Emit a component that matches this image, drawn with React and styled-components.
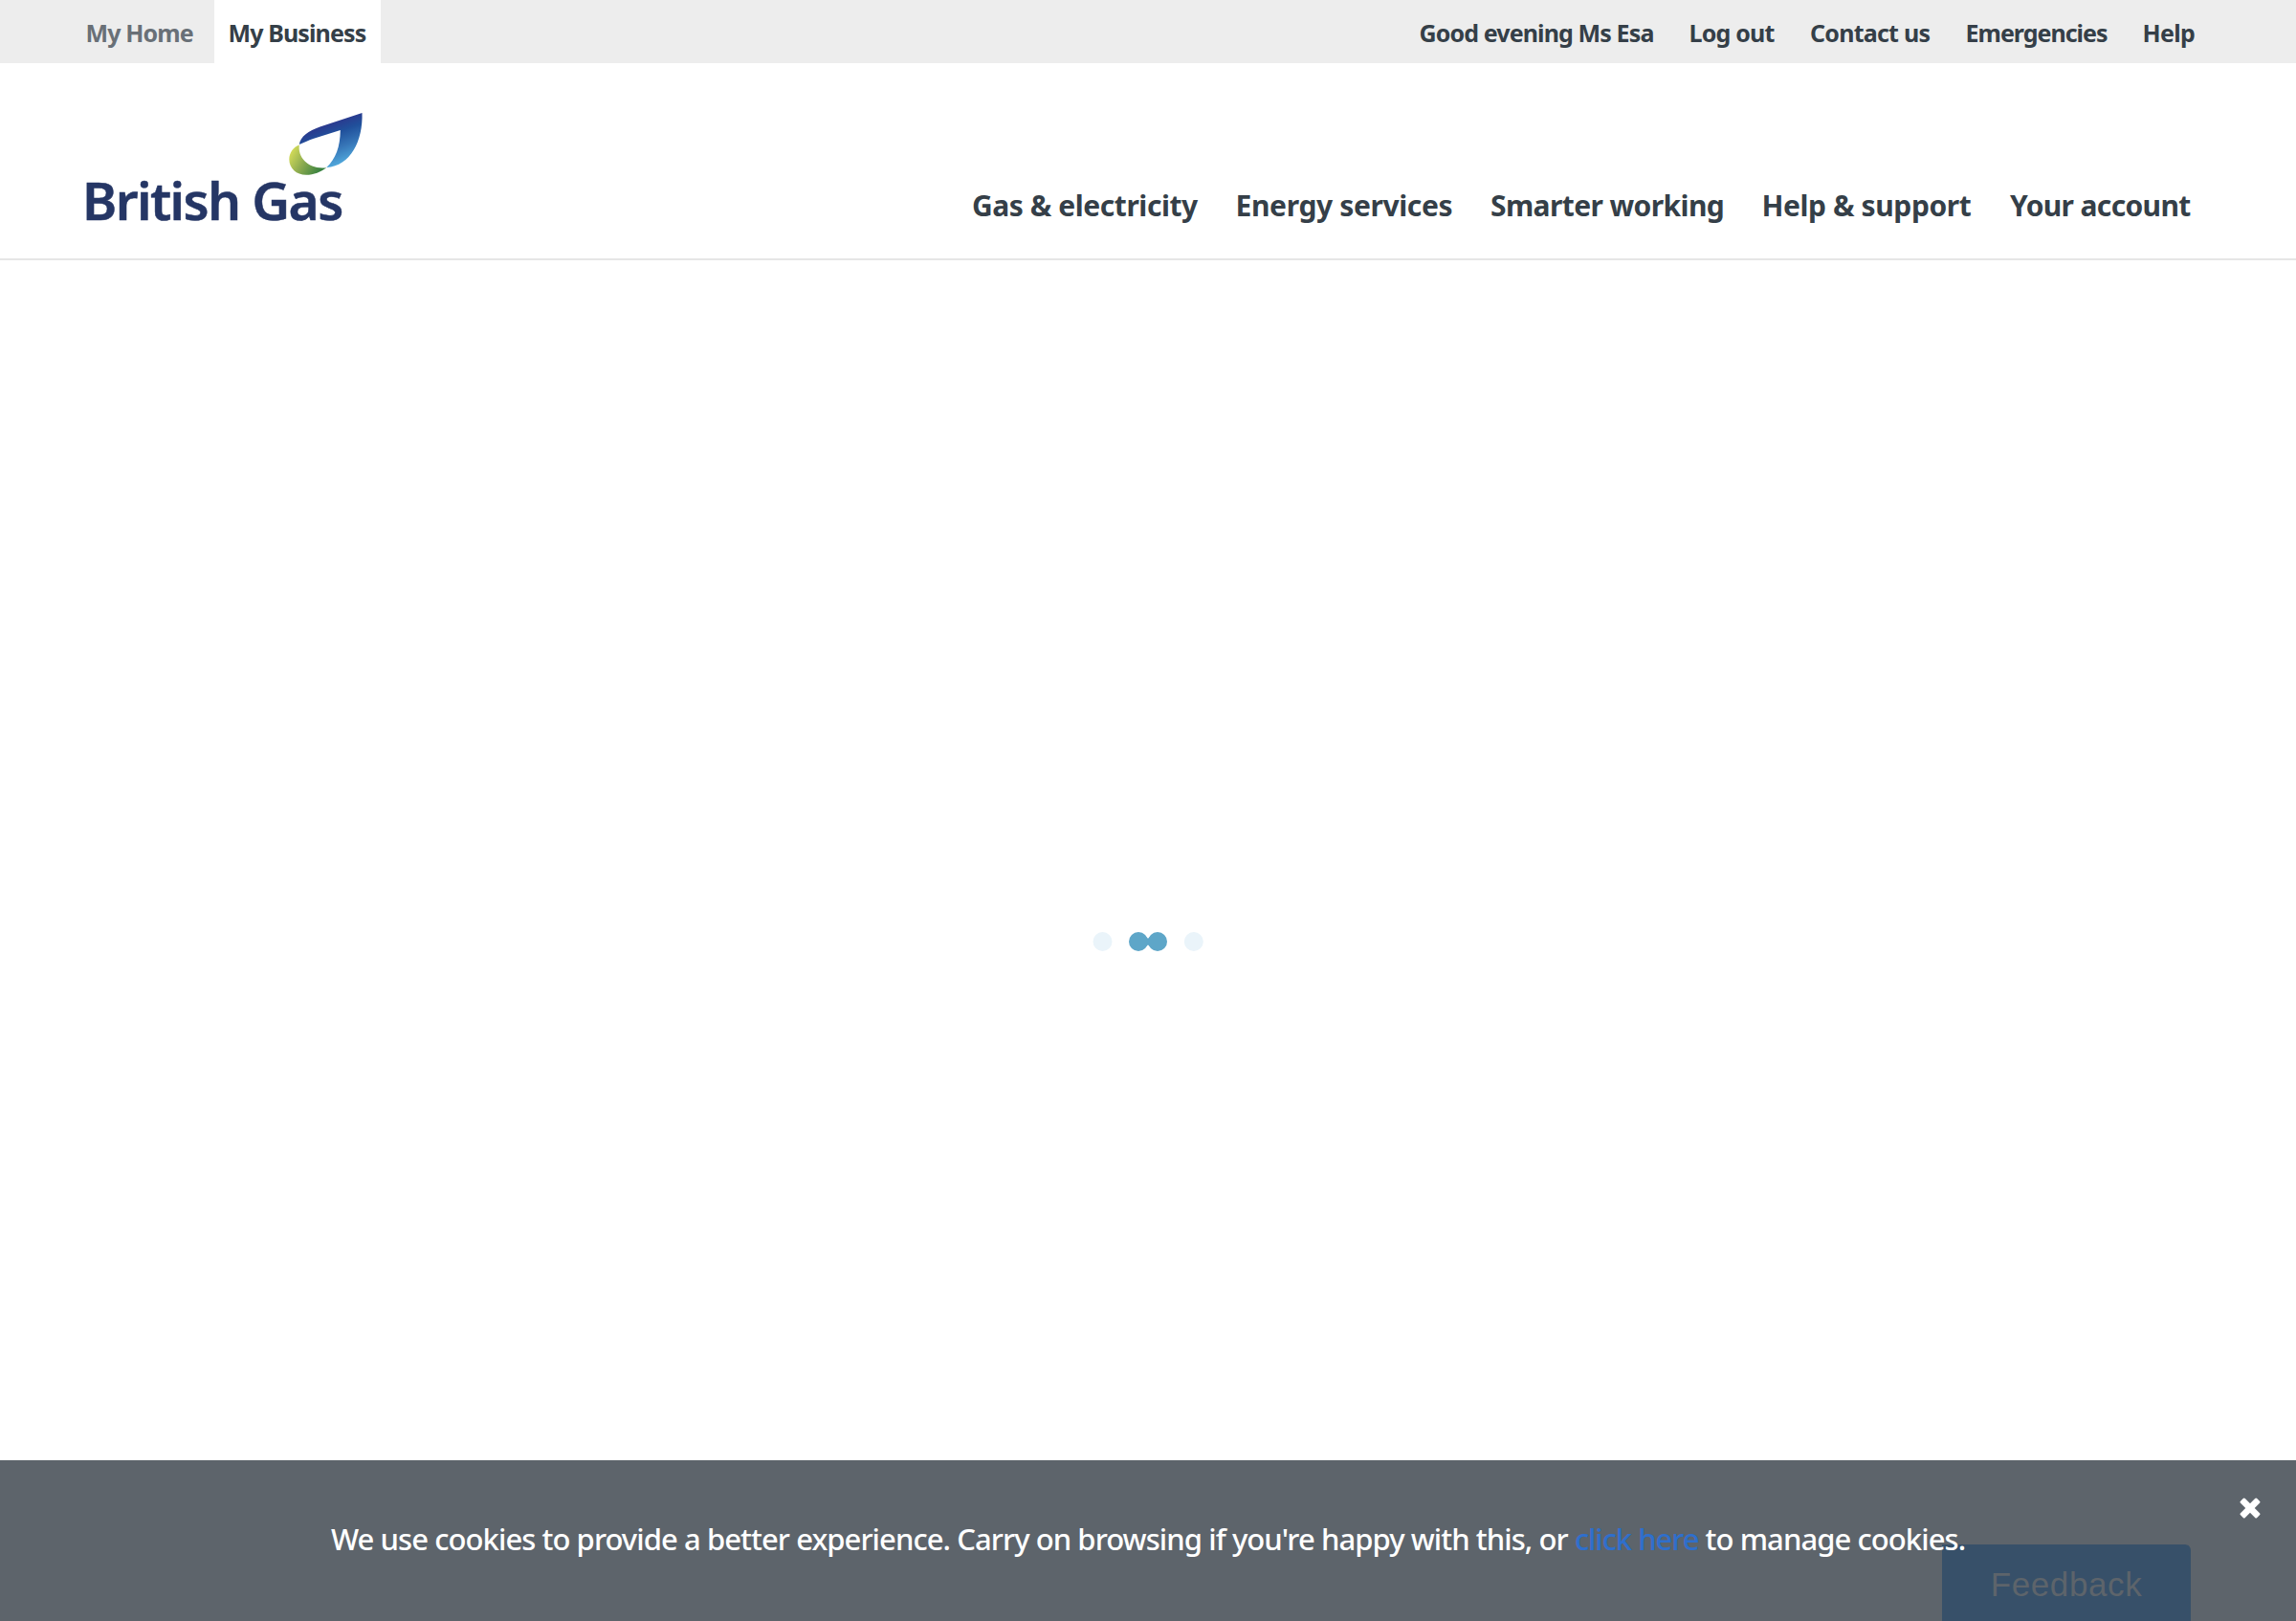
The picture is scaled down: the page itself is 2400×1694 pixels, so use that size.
import React from "react";
import styled, { createGlobalStyle } from "styled-components";

const GlobalStyle = createGlobalStyle`
  * { box-sizing: border-box; }
  body {
    margin: 0;
    background: #fff;
    color: #353f48;
    font-family: "Noto Sans", "Open Sans", sans-serif;
  }
`;

const Page = styled.div`
  display: flex;
  flex-direction: column;
  height: 1694px;
  overflow: hidden;
`;

const TopBar = styled.div`
  display: flex;
  justify-content: space-between;
  height: 66px;
  padding-right: 105px;
  padding-left: 73px;
  background: #ededed;
`;

const Tabs = styled.div`
  display: flex;
`;

const Tab = styled.a`
  width: ${(p) => (p.$active ? 174 : 151)}px;
  padding: 2px 0 0 ${(p) => (p.$active ? 14.5 : 16.5)}px;
  background: ${(p) => (p.$active ? "#fff" : "transparent")};
  color: ${(p) => (p.$active ? "#353f48" : "#697077")};
  font-size: 25px;
  font-weight: 700;
  line-height: 64px;
  letter-spacing: -0.88px;
  white-space: nowrap;
`;

const UtilityLinks = styled.nav`
  display: flex;
  gap: 36px;
  padding-top: 2px;
`;

const UtilityLink = styled.a`
  width: ${(p) => p.$width}px;
  font-size: 25px;
  font-weight: 700;
  line-height: 64px;
  letter-spacing: ${(p) => p.$tracking}px;
  white-space: nowrap;
`;

const Header = styled.header`
  display: flex;
  align-items: flex-end;
  justify-content: space-between;
  height: 206px;
  padding: 0 110px 24px 80px;
  border-bottom: 2px solid #e6e6e6;
`;

const Logo = styled.svg`
  display: block;
  width: 300px;
  height: 136px;
`;

const Wordmark = styled.text`
  fill: #253665;
  stroke: #253665;
  stroke-width: 0.5px;
  font-size: 55px;
  font-weight: 600;
  letter-spacing: -1.6px;
`;

const MainNav = styled.nav`
  display: flex;
  gap: 39px;
  padding-bottom: 11px;
`;

const NavLink = styled.a`
  width: ${(p) => p.$width}px;
  font-size: 30px;
  font-weight: 700;
  line-height: 40px;
  letter-spacing: ${(p) => p.$tracking}px;
  white-space: nowrap;
`;

const Main = styled.main`
  display: flex;
  flex: 1;
  justify-content: center;
  padding-top: 702px;
`;

const Loader = styled.svg`
  width: 120px;
  height: 20px;
`;

const CookieBar = styled.footer`
  position: relative;
  display: flex;
  justify-content: space-between;
  height: 168px;
  padding: 39px 37px 0 346px;
  background: #5d646b;
`;

const CookieText = styled.p`
  position: relative;
  z-index: 1;
  margin: 23px 0 0;
  color: #fff;
  font-size: 31px;
  font-weight: 500;
  line-height: 40px;
  letter-spacing: -0.93px;
  white-space: nowrap;
`;

const CookieLink = styled.a`
  color: #2f6fcc;
  letter-spacing: -1.05px;
`;

const CloseButton = styled.button`
  width: 22px;
  height: 22px;
  padding: 0;
  border: 0;
  background: none;

  svg {
    display: block;
  }
`;

const Feedback = styled.button`
  position: absolute;
  right: 110px;
  bottom: 0;
  width: 260px;
  height: 80px;
  padding: 2px 0 0;
  border: 0;
  border-radius: 0 6px 0 0;
  background: #375069;
  color: #5d646b;
  font: 35px / 80px "Liberation Sans", Arial, sans-serif;
  letter-spacing: 0.6px;
`;

const utilityLinks = [
  { label: "Good evening Ms Esa", width: 246, tracking: -0.88 },
  { label: "Log out", width: 90.5, tracking: -0.8 },
  { label: "Contact us", width: 126.5, tracking: -0.76 },
  { label: "Emergencies", width: 149, tracking: -1 },
  { label: "Help", width: 55.5, tracking: -0.7 },
];

const navLinks = [
  { label: "Gas & electricity", width: 236.5, tracking: -0.43 },
  { label: "Energy services", width: 227.5, tracking: -0.36 },
  { label: "Smarter working", width: 244.5, tracking: -0.6 },
  { label: "Help & support", width: 220.5, tracking: -0.4 },
  { label: "Your account", width: 189, tracking: -0.65 },
];

function BritishGasLogo() {
  return (
    <Logo viewBox="80 110 300 136" role="img" aria-label="British Gas">
      <defs>
        <linearGradient id="flame" gradientUnits="userSpaceOnUse" x1="334" y1="130" x2="351" y2="175">
          <stop offset="0" stopColor="#2d348b" />
          <stop offset="0.3" stopColor="#20509b" />
          <stop offset="0.62" stopColor="#3675b7" />
          <stop offset="1" stopColor="#53addf" />
        </linearGradient>
        <linearGradient id="leaf" gradientUnits="userSpaceOnUse" x1="303" y1="159" x2="336" y2="178">
          <stop offset="0" stopColor="#d6dd59" />
          <stop offset="0.45" stopColor="#8eac50" />
          <stop offset="1" stopColor="#35803f" />
        </linearGradient>
      </defs>
      <path
        fill="url(#flame)"
        d="M312.8 151C314 142.5 322.5 137 334.5 132.5L378.5 118C379.5 147 366.5 173.5 341.3 175C351 166 355.5 153.5 355.8 136L328 144.8C322 147 317.5 149 312.8 151Z"
      />
      <path
        fill="url(#leaf)"
        d="M312.8 151.5C306.5 153.5 302.3 160 302.3 166.5C302.3 176 310 182.8 320 182.8C328 182.8 335.5 179.5 341.3 175.2C323.5 177.5 311 165.5 312.8 151.5Z"
      />
      <Wordmark x="86" y="229.6">British Gas</Wordmark>
    </Logo>
  );
}

export default function App() {
  return (
    <Page>
      <GlobalStyle />
      <TopBar>
        <Tabs>
          <Tab>My Home</Tab>
          <Tab $active>My Business</Tab>
        </Tabs>
        <UtilityLinks>
          {utilityLinks.map((l) => (
            <UtilityLink key={l.label} $width={l.width} $tracking={l.tracking}>
              {l.label}
            </UtilityLink>
          ))}
        </UtilityLinks>
      </TopBar>
      <Header>
        <BritishGasLogo />
        <MainNav>
          {navLinks.map((l) => (
            <NavLink key={l.label} $width={l.width} $tracking={l.tracking}>
              {l.label}
            </NavLink>
          ))}
        </MainNav>
      </Header>
      <Main>
        <Loader viewBox="1140 974 120 20">
          <circle cx="1152.5" cy="984" r="10" fill="#eaf4fa" />
          <circle cx="1247.8" cy="984" r="10" fill="#eaf4fa" />
          <circle cx="1190" cy="984" r="10" fill="#5ea6c8" />
          <circle cx="1210" cy="984" r="10" fill="#5ea6c8" />
          <path d="M1198 979Q1200 982 1202 979V989Q1200 986 1198 989Z" fill="#5ea6c8" />
        </Loader>
      </Main>
      <CookieBar>
        <CookieText>
          We use cookies to provide a better experience. Carry on browsing if you're happy with this, or{" "}
          <CookieLink>click here</CookieLink> to manage cookies.
        </CookieText>
        <CloseButton aria-label="Close">
          <svg width="22" height="22" viewBox="0 0 22 22">
            <g fill="#fff">
              <rect x="-1.2" y="7.6" width="24.4" height="6.8" rx="1.5" transform="rotate(45 11 11)" />
              <rect x="-1.2" y="7.6" width="24.4" height="6.8" rx="1.5" transform="rotate(-45 11 11)" />
            </g>
          </svg>
        </CloseButton>
        <Feedback>Feedback</Feedback>
      </CookieBar>
    </Page>
  );
}
